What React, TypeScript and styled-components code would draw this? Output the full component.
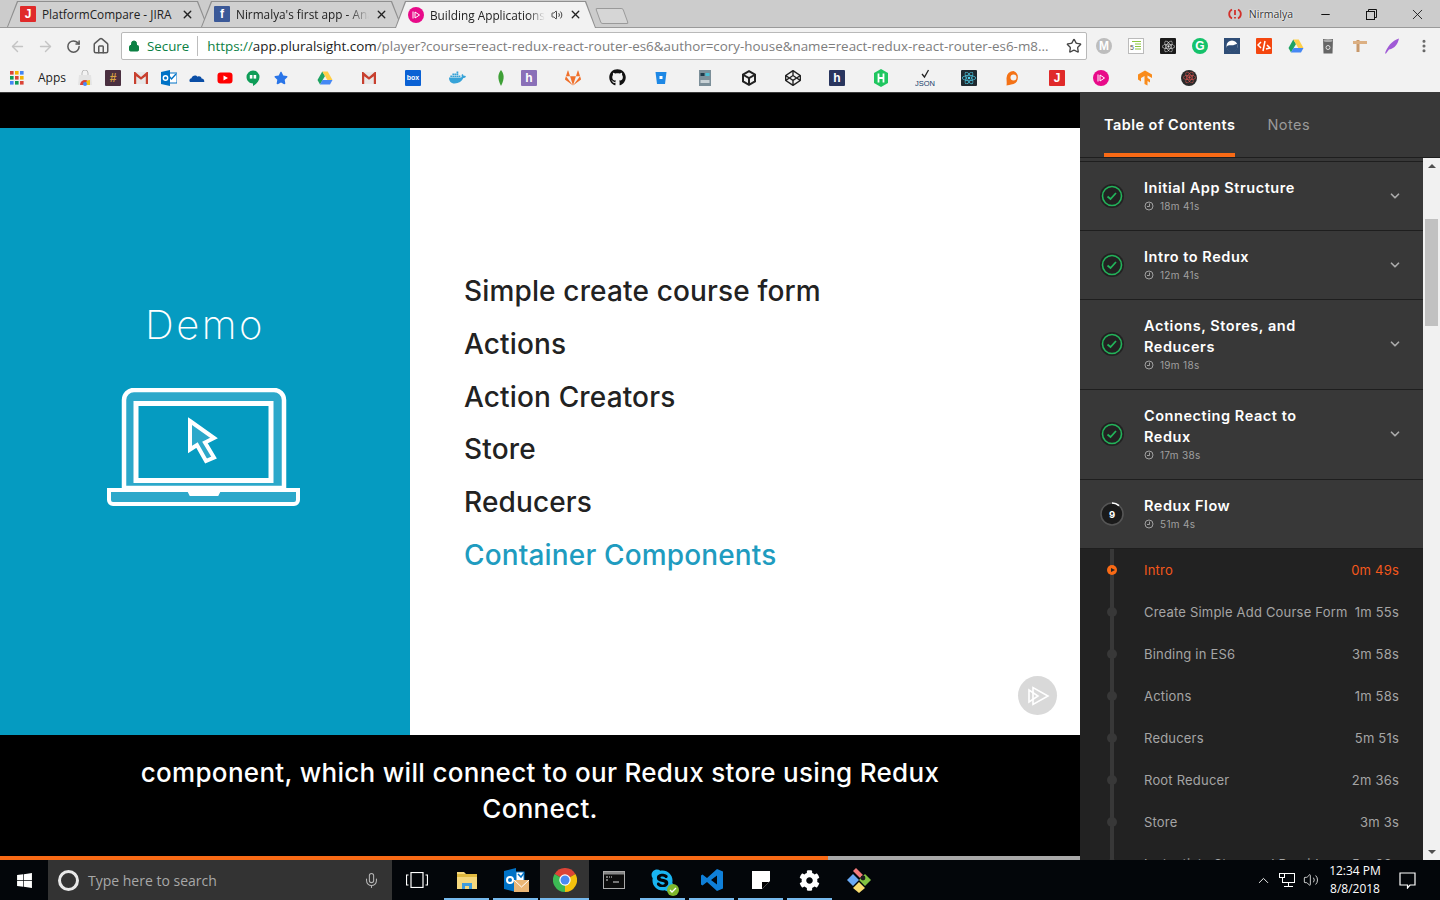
import React from "react"
import styled, { createGlobalStyle } from "styled-components"
import { ArrowLeft, ArrowRight, RotateCw, Home, Star, Lock, Mic, ChevronUp, ChevronDown, Volume2, MoreVertical, X, Minus } from "lucide-react"
import { FaWindows, FaGithub, FaGitlab, FaDocker, FaStar, FaCodepen, FaReact, FaCog, FaSkype } from "react-icons/fa"

const GlobalStyle = createGlobalStyle`
  html, body { margin: 0; padding: 0; background: #000; overflow: hidden; }
  * { box-sizing: border-box; }
`

const Page = styled.div`
  width: 1440px;
  height: 900px;
  display: flex;
  flex-direction: column;
  overflow: hidden;
  font-family: "Open Sans", "Noto Sans", sans-serif;
`

/* browser chrome */
const Browser = styled.div`
  height: 93px;
  display: flex;
  flex-direction: column;
  background: #f2f2f2;
  border-bottom: 1px solid #3a3a3a;
`

const TabStrip = styled.div`
  height: 28px;
  display: flex;
  background: #cccccc;
  border-bottom: 1px solid #9a9a9a;
  padding-left: 7px;
  padding-top: 1px;
`

const Tab = styled.div<{ $active?: boolean }>`
  position: relative;
  width: 201px;
  height: ${p => (p.$active ? 27 : 26)}px;
  margin-right: -7px;
  padding: 0 14px 0 13px;
  display: flex;
  align-items: center;
  gap: 6px;
  font-size: 11.8px;
  color: #222;
  background: #8f8f8f;
  clip-path: polygon(0 100%, 10px 0, calc(100% - 10px) 0, 100% 100%);
  z-index: ${p => (p.$active ? 2 : 1)};
  &::before {
    content: "";
    position: absolute;
    inset: 1px 1px 0 1px;
    background: ${p => (p.$active ? "#f2f2f2" : "#d0d0d0")};
    clip-path: polygon(0 100%, 10px 0, calc(100% - 10px) 0, 100% 100%);
  }
  & > * { position: relative; }
  & > svg { flex: none; }
`

const TabTitle = styled.span<{ $fade?: boolean }>`
  flex: 1;
  min-width: 0;
  white-space: nowrap;
  overflow: hidden;
  ${p => p.$fade && `
    -webkit-mask-image: linear-gradient(90deg, #000 85%, transparent 100%);
    mask-image: linear-gradient(90deg, #000 85%, transparent 100%);
  `}
`

const NewTab = styled.div`
  width: 28px;
  height: 16px;
  margin: 7px 0 0 9px;
  background: #d6d6d6;
  border: 1px solid #9a9a9a;
  transform: skewX(20deg);
  border-radius: 2px;
`

const Spacer = styled.div`
  flex: 1;
`

const Profile = styled.div`
  display: flex;
  align-items: center;
  gap: 7px;
  height: 26px;
  margin-right: 9px;
  font-size: 10.5px;
  color: #333;
  text-shadow: 0 0 2px #fff, 0 0 2px #fff;
`

const WinButton = styled.div`
  width: 46px;
  height: 26px;
  display: flex;
  align-items: center;
  justify-content: center;
  color: #111;
`

const Toolbar = styled.div`
  height: 35px;
  display: flex;
  align-items: center;
  padding: 1px 0 0 3px;
`

const NavButton = styled.div<{ $off?: boolean }>`
  width: 28px;
  height: 28px;
  display: flex;
  align-items: center;
  justify-content: center;
  color: ${p => (p.$off ? "#c4c4c4" : "#5a5a5a")};
`

const Omnibox = styled.div`
  width: 966px;
  height: 28px;
  margin-left: 6px;
  display: flex;
  align-items: center;
  padding: 0 4px 0 6px;
  background: #fff;
  border: 1px solid #b9b9b9;
  border-radius: 2px;
  font-size: 13.3px;
  white-space: nowrap;
`

const Secure = styled.span`
  color: #0b8043;
  margin-left: 7px;
  padding-right: 8px;
  border-right: 1px solid #bdbdbd;
  line-height: 20px;
  margin-right: 9px;
`

const Url = styled.span`
  flex: 1;
  color: #7d7d7d;
  font-size: 13.4px;
  b { font-weight: 400; color: #222; }
  i { font-style: normal; color: #0b8043; }
`

const Extensions = styled.div`
  display: flex;
  margin-left: 1px;
`

const Ext = styled.div`
  width: 32px;
  height: 28px;
  display: flex;
  align-items: center;
  justify-content: center;
`

const Bookmarks = styled.div`
  flex: 1;
  display: flex;
  align-items: center;
  padding-left: 3px;
`

const Mark = styled.div<{ $wide?: boolean }>`
  width: 28px;
  height: 28px;
  flex: none;
  margin-left: ${p => (p.$wide ? 16 : 0)}px;
  display: flex;
  align-items: center;
  justify-content: center;
`

const AppsLabel = styled.span`
  font-size: 12px;
  color: #222;
  width: 40px;
  padding-left: 7px;
`

const Tile = styled.span<{ $bg: string; $fg?: string; $round?: boolean; $small?: boolean }>`
  width: 16px;
  height: 16px;
  flex: none;
  display: flex;
  align-items: center;
  justify-content: center;
  background: ${p => p.$bg};
  color: ${p => p.$fg || "#fff"};
  border-radius: ${p => (p.$round ? "50%" : "1px")};
  font: 700 ${p => (p.$small ? 7 : 12)}px "Liberation Sans", sans-serif;
`

/* player */
const Main = styled.div`
  height: 767px;
  display: flex;
`

const Player = styled.div`
  width: 1080px;
  display: flex;
  flex-direction: column;
  background: #000;
`

const TopBar = styled.div`
  height: 35px;
  background: #000;
`

const Slide = styled.div`
  position: relative;
  height: 607px;
  display: flex;
  background: #fff;
`

const SlideSide = styled.div`
  width: 410px;
  background: #059bc1;
  display: flex;
  flex-direction: column;
  align-items: center;
  padding-top: 174px;
`

const DemoTitle = styled.div`
  font-family: Inter, sans-serif;
  font-weight: 200;
  font-size: 40px;
  line-height: 46px;
  color: #fff;
  letter-spacing: 2.5px;
  margin-bottom: 40px;
`

const LaptopSvg = styled.svg`
  margin-right: 3px;
`

const SlideList = styled.div`
  flex: 1;
  padding: 137px 0 0 54px;
`

const SlideItem = styled.div<{ $hot?: boolean }>`
  height: 52.8px;
  line-height: 53px;
  font-family: Inter, sans-serif;
  font-weight: 500;
  font-size: 28px;
  letter-spacing: 0.15px;
  color: ${p => (p.$hot ? "#1f9cc0" : "#222")};
`

const Watermark = styled.div`
  position: absolute;
  right: 23px;
  bottom: 20px;
  width: 39px;
  height: 39px;
  border-radius: 50%;
  background: #d9d9d9;
  display: flex;
  align-items: center;
  justify-content: center;
`

const Caption = styled.div`
  flex: 1;
  padding-top: 20px;
  text-align: center;
  font-family: Inter, sans-serif;
  font-weight: 500;
  font-size: 26px;
  letter-spacing: 0.3px;
  line-height: 36px;
  color: #fff;
`

const Progress = styled.div`
  height: 4px;
  background: #a8a8a8;
`

const ProgressFill = styled.div<{ $pct: number }>`
  height: 100%;
  width: ${p => p.$pct}%;
  background: #f96a15;
`

/* table of contents */
const Side = styled.div`
  width: 360px;
  display: flex;
  flex-direction: column;
  background: #383838;
  font-family: Inter, sans-serif;
`

const SideTabs = styled.div`
  height: 65px;
  flex: none;
  display: flex;
  gap: 32px;
  padding-left: 24px;
  border-bottom: 1px solid #1e1e1e;
`

const SideTab = styled.div<{ $on?: boolean }>`
  height: 64px;
  line-height: 64px;
  font-size: 14.5px;
  letter-spacing: 0.45px;
  font-weight: ${p => (p.$on ? 600 : 400)};
  color: ${p => (p.$on ? "#fff" : "#9a9a9a")};
  border-bottom: 4px solid ${p => (p.$on ? "#f96a15" : "transparent")};
`

const SideBody = styled.div`
  flex: 1;
  display: flex;
  min-height: 0;
`

const Outline = styled.div`
  flex: 1;
  overflow: hidden;
  padding-top: 3px;
`

const Section = styled.div`
  display: flex;
  align-items: center;
  border-top: 1px solid #1e1e1e;
  padding: 15px 24px 16px 0;
`

const Badge = styled.div`
  width: 64px;
  flex: none;
  display: flex;
  justify-content: center;
`

const SectionText = styled.div`
  flex: 1;
  width: 0;
`

const SectionTitle = styled.div`
  font-size: 14.5px;
  font-weight: 600;
  letter-spacing: 0.55px;
  line-height: 21px;
  color: #fff;
  padding-right: 70px;
`

const SectionTime = styled.div`
  display: flex;
  align-items: center;
  gap: 6px;
  height: 16px;
  font-size: 10px;
  letter-spacing: 0.3px;
  color: #a0a0a0;
`

const Chevron = styled(ChevronDown)`
  color: #aaa;
  margin-right: -3px;
`

const Clips = styled.div`
  position: relative;
  background: #222;
  border-top: 1px solid #1e1e1e;
  &::before {
    content: "";
    position: absolute;
    left: 30px;
    top: 0;
    bottom: 0;
    width: 4px;
    background: #383838;
  }
`

const Clip = styled.div<{ $on?: boolean }>`
  height: 42px;
  display: flex;
  align-items: center;
  padding-right: 24px;
  font-size: 13px;
  letter-spacing: 0.2px;
  color: ${p => (p.$on ? "#f4581c" : "#a5a5a5")};
`

const ClipDot = styled.span<{ $on?: boolean }>`
  position: relative;
  width: 10px;
  height: 10px;
  flex: none;
  margin: 0 27px;
  border-radius: 50%;
  background: ${p => (p.$on ? "#f96a15" : "#383838")};
  ${p => p.$on && `
    &::after {
      content: "";
      position: absolute;
      left: 4px;
      top: 3px;
      border-left: 4px solid #222;
      border-top: 2px solid transparent;
      border-bottom: 2px solid transparent;
    }
  `}
`

const ClipName = styled.span`
  flex: 1;
  white-space: nowrap;
`

const Scrollbar = styled.div`
  width: 17px;
  flex: none;
  display: flex;
  flex-direction: column;
  align-items: center;
  background: #f1f1f1;
`

const ScrollArrow = styled.div<{ $down?: boolean }>`
  width: 0;
  height: 0;
  margin: ${p => (p.$down ? "auto 0 6px" : "6px 0 0")};
  border-left: 4px solid transparent;
  border-right: 4px solid transparent;
  ${p => (p.$down ? "border-top: 4px solid #505050;" : "border-bottom: 4px solid #505050;")}
`

const ScrollThumb = styled.div`
  width: 13px;
  height: 107px;
  margin-top: 51px;
  background: #c1c1c1;
`

/* windows taskbar */
const Taskbar = styled.div`
  height: 40px;
  display: flex;
  align-items: stretch;
  background: #03060a;
`

const StartButton = styled.div`
  width: 48px;
  display: flex;
  align-items: center;
  justify-content: center;
  color: #fff;
`

const SearchBox = styled.div`
  width: 344px;
  display: flex;
  align-items: center;
  padding: 0 12px 0 10px;
  background: #333;
  color: #a8a8a8;
  font-size: 14px;
`

const Cortana = styled.span`
  width: 21px;
  height: 21px;
  margin-right: 9px;
  border: 3px solid #e8e8e8;
  border-radius: 50%;
`

const TaskButton = styled.div<{ $open?: boolean; $active?: boolean; $wide?: boolean }>`
  position: relative;
  width: ${p => (p.$wide ? 50 : 49)}px;
  display: flex;
  align-items: center;
  justify-content: center;
  background: ${p => (p.$active ? "#333" : "transparent")};
  ${p => p.$open && `
    &::after {
      content: "";
      position: absolute;
      left: ${p.$active ? 0 : 2}px;
      right: ${p.$active ? 0 : 2}px;
      bottom: 0;
      height: 2px;
      background: #76b9ed;
    }
  `}
`

const SkypeWrap = styled.span`
  position: relative;
  display: inline-flex;
  svg + svg {
    position: absolute;
    right: -4px;
    bottom: -3px;
  }
`

const Tray = styled.div`
  display: flex;
  align-items: center;
  color: #fff;
  padding-right: 18px;
`

const TrayIcon = styled.div`
  width: 24px;
  display: flex;
  justify-content: center;
`

const Clock = styled.div`
  width: 64px;
  text-align: center;
  font-size: 12px;
  line-height: 18px;
  color: #fff;
`

const Notify = styled.div`
  width: 30px;
  margin-left: 5px;
  display: flex;
  justify-content: center;
`

const ChromeIcon = ({ size = 16 }: { size?: number }) => (
  <svg width={size} height={size} viewBox="0 0 16 16">
    <path d="M8 8L1.07 4A8 8 0 0 1 14.93 4Z" fill="#db4437" />
    <path d="M8 8L14.93 4A8 8 0 0 1 8 16Z" fill="#f4c20d" />
    <path d="M8 8L8 16A8 8 0 0 1 1.07 4Z" fill="#3cba54" />
    <circle cx="8" cy="8" r="3.8" fill="#fff" />
    <circle cx="8" cy="8" r="3" fill="#4a8af4" />
  </svg>
)

const DriveIcon = () => (
  <svg width="16" height="16" viewBox="0 0 16 16">
    <path d="M5.3 1.5L0.5 10L3 14.5L8 6Z" fill="#1ea362" />
    <path d="M5.3 1.5H10.7L15.5 10H10.3Z" fill="#ffcf48" />
    <path d="M3 14.5L5.5 10H15.5L13 14.5Z" fill="#4688f4" />
  </svg>
)

const GmailIcon = () => (
  <svg width="16" height="16" viewBox="0 0 16 16">
    <rect x="1" y="2" width="14" height="12" fill="#e8e8e8" />
    <path d="M1 2V14H3.2V6.2L8 9.800L12.800 6.200V14H15V2H13.800L8 7L2.200 2Z" fill="#c8402f" />
  </svg>
)

const AppsIcon = () => {
  const colors = ["#db4437", "#f4b400", "#4285f4", "#0f9d58", "#db4437", "#f4b400", "#4285f4", "#0f9d58", "#db4437"]
  return (
    <svg width="14" height="14" viewBox="0 0 14 14">
      {colors.map((c, i) => (
        <rect key={i} x={(i % 3) * 5} y={Math.floor(i / 3) * 5} width="3.6" height="3.6" fill={c} />
      ))}
    </svg>
  )
}

const OutlookIcon = ({ size = 16 }: { size?: number }) => (
  <svg width={size} height={size} viewBox="0 0 16 16">
    <rect x="6" y="3" width="10" height="10" fill="#fff" stroke="#0072c6" />
    <path d="M8 6l2.500 3L15 4" fill="none" stroke="#0072c6" strokeWidth="1.400" />
    <path d="M0 2L9 0V16L0 14Z" fill="#0072c6" />
    <circle cx="4.500" cy="8" r="2.200" fill="none" stroke="#fff" strokeWidth="1.400" />
  </svg>
)

const OneDriveIcon = () => (
  <svg width="16" height="16" viewBox="0 0 16 16">
    <path d="M1 12c-1.200-1.500-.4-3.600 1.500-3.800C3.200 5.500 6.800 4.500 8.600 6.800c1.600-1 3.600-.2 4 1.600 1.800 0 3 1.600 2.600 3.600Z" fill="#0a4ea6" />
  </svg>
)

const YoutubeIcon = () => (
  <svg width="16" height="16" viewBox="0 0 16 16">
    <rect x="0.500" y="2.500" width="15" height="11" rx="3" fill="#f00" />
    <path d="M6.500 5.500L11 8L6.500 10.500Z" fill="#fff" />
  </svg>
)

const HangoutsIcon = () => (
  <svg width="16" height="16" viewBox="0 0 16 16">
    <path d="M8 0.500a6.500 6.500 0 0 0-6.500 6.500c0 3.600 3 6.500 6.500 6.500V16c3.500-1.800 6.500-5 6.500-9A6.500 6.500 0 0 0 8 .5Z" fill="#0f9d58" />
    <rect x="4.800" y="5" width="2.600" height="3.600" fill="#fff" />
    <rect x="8.600" y="5" width="2.600" height="3.600" fill="#fff" />
  </svg>
)

const StoreIcon = () => (
  <svg width="16" height="16" viewBox="0 0 16 16">
    <path d="M2 5H14L15 15H1Z" fill="#e4e4e4" />
    <path d="M5 5V3a3 3 0 0 1 6 0V5" fill="none" stroke="#bbb" />
    <path d="M3 15a5 5 0 0 1 10 0Z" fill="#db4437" />
    <path d="M8 15a5 5 0 0 1 5-5v5Z" fill="#f4c20d" />
    <circle cx="8" cy="14" r="2" fill="#4a8af4" />
  </svg>
)

const BucketIcon = () => (
  <svg width="16" height="16" viewBox="0 0 16 16">
    <path d="M2.500 2H13.500L12 14H4Z" fill="#1e88e5" />
    <rect x="6.500" y="6" width="3" height="3" fill="#fff" />
  </svg>
)

const ServerIcon = () => (
  <svg width="16" height="16" viewBox="0 0 16 16">
    <rect x="2" y="0" width="12" height="16" fill="#7c8f99" />
    <rect x="3.500" y="3" width="4" height="3" fill="#1e3a4a" />
    <rect x="8.500" y="3" width="4" height="3" fill="#49c0d6" />
    <rect x="3.500" y="10" width="9" height="3" fill="#c9d2d6" />
  </svg>
)

const LeafIcon = () => (
  <svg width="16" height="16" viewBox="0 0 16 16">
    <path d="M8 0C11 4 12 8 8 16C4 8 5 4 8 0Z" fill="#3fa037" />
  </svg>
)

const CubeIcon = () => (
  <svg width="16" height="16" viewBox="0 0 16 16" fill="none" stroke="#222" strokeWidth="2">
    <path d="M8 1.200L14 4.600V11.400L8 14.800L2 11.400V4.600Z" />
    <path d="M2.500 5L8 8.200L13.500 5M8 8.200V14.500" />
  </svg>
)

const PluralsightIcon = ({ size = 16 }: { size?: number }) => (
  <svg width={size} height={size} viewBox="0 0 16 16">
    <circle cx="8" cy="8" r="8" fill="#e80a89" />
    <path d="M5 4.500V11.500M7 5L11.500 8L7 11Z" fill="none" stroke="#fff" strokeWidth="1" />
  </svg>
)

const TensorIcon = () => (
  <svg width="16" height="16" viewBox="0 0 16 16">
    <path d="M1 4.500L8 .5L15 4.500V8L10.500 5.500V8L13 9.500V12.500L10.500 11V15.500L7.500 14V6L4 8V11.500L1 9.500Z" fill="#f98b1b" />
  </svg>
)

const OrangeIcon = () => (
  <svg width="16" height="16" viewBox="0 0 16 16">
    <path d="M8.500 1a7 7 0 0 1 0 13C5 14.500 3 15.500 1.500 15.500 2 13 1.500 11 1.500 8A7 7 0 0 1 8.500 1Z" fill="#f47216" />
    <circle cx="8.500" cy="7.500" r="3" fill="#f2f2f2" />
  </svg>
)

const HexIcon = () => (
  <svg width="16" height="18" viewBox="0 0 16 18">
    <path d="M8 0L15 4V14L8 18L1 14V4Z" fill="#1fc65f" />
    <path d="M5.500 4.500V13.500M10.500 4.500V13.500M5.500 9H10.500" stroke="#fff" strokeWidth="1.800" />
  </svg>
)

const JsonIcon = () => (
  <svg width="20" height="18" viewBox="0 0 20 18">
    <path d="M7 5L9.500 8L13.500 1" fill="none" stroke="#222" strokeWidth="1.300" />
    <text x="10" y="17" textAnchor="middle" fontSize="7.500" fontFamily="Liberation Sans, sans-serif" fill="#173a6b">JSON</text>
  </svg>
)

const DocIcon = () => (
  <svg width="16" height="16" viewBox="0 0 16 16">
    <rect x="0.500" y="0.500" width="15" height="15" fill="#fff" stroke="#bbb" />
    <path d="M4 3.500H13M7 6H13M7 8.500H13M7 11H13" stroke="#8cc63f" strokeWidth="1.200" />
    <text x="2" y="12" fontSize="7" fontFamily="Liberation Sans, sans-serif" fill="#555">5</text>
  </svg>
)

const SeaIcon = () => (
  <svg width="16" height="16" viewBox="0 0 16 16">
    <rect width="16" height="16" fill="#2f4d76" />
    <circle cx="8" cy="8" r="5.500" fill="#fff" />
    <path d="M2.500 9c2-3 5-1 7.500-2 1.500-.6 2.500-1 3.500-1v2.500a5.500 5.500 0 0 1-11 .5Z" fill="#2f4d76" />
  </svg>
)

const CodeTileIcon = () => (
  <Tile $bg="#f4460f">
    <svg width="14" height="12" viewBox="0 0 14 12" fill="none" stroke="#fff" strokeWidth="1.500">
      <path d="M4 2L1 5L4 8M8 1L6 11M10 5L13 8L9 9" />
    </svg>
  </Tile>
)

const TrashIcon = () => (
  <svg width="16" height="16" viewBox="0 0 16 16">
    <path d="M3 1H13L12.500 15.500H3.500Z" fill="#666" />
    <ellipse cx="8" cy="2.500" rx="4.500" ry="1.500" fill="#aaa" />
    <circle cx="8" cy="9.500" r="2" fill="none" stroke="#ddd" />
  </svg>
)

const SignIcon = () => (
  <svg width="16" height="16" viewBox="0 0 16 16">
    <rect x="4.500" y="2" width="3" height="12" fill="#c8986a" />
    <rect x="1" y="3" width="14" height="3" fill="#dcb083" />
  </svg>
)

const QuillIcon = () => (
  <svg width="16" height="16" viewBox="0 0 16 16">
    <path d="M1 15.500C3 9 8 2.500 15 .5c-1 5-4 10-10 11L2 15.500Z" fill="#a05ad6" />
  </svg>
)

const FolderIcon = () => (
  <svg width="22" height="22" viewBox="0 0 22 22">
    <path d="M1 3H8L10 5H21V20H1Z" fill="#f5d77c" />
    <rect x="1" y="5" width="20" height="3" fill="#e0b93f" />
    <path d="M6 20V14H16V20H13V17H9V20Z" fill="#3f9cdc" />
  </svg>
)

const MailAppIcon = () => (
  <svg width="26" height="26" viewBox="0 0 26 26">
    <path d="M1 4L13 1V25L1 22Z" fill="#0072c6" />
    <rect x="13" y="5" width="8" height="10" fill="#fff" stroke="#0072c6" />
    <circle cx="7" cy="13" r="3" fill="none" stroke="#fff" strokeWidth="2" />
    <path d="M15 7l3 3 3-4" fill="none" stroke="#0072c6" strokeWidth="1.500" />
    <rect x="11" y="13" width="15" height="12" fill="#eab676" />
    <path d="M11 13L18.500 20L26 13" fill="none" stroke="#fff" strokeWidth="1" />
  </svg>
)

const ConsoleIcon = () => (
  <svg width="22" height="18" viewBox="0 0 22 18">
    <rect x="0.500" y="0.500" width="21" height="17" fill="#0c0c0c" stroke="#aaa" />
    <rect x="1" y="1" width="20" height="2.500" fill="#888" />
    <path d="M3 6H5M6 6H7M8 6H9M3 9H5M10 11H16" stroke="#ddd" strokeWidth="1.200" />
  </svg>
)

const SkypeAppIcon = () => (
  <SkypeWrap>
    <FaSkype size={25} color="#19b4f1" />
    <svg width="12" height="12" viewBox="0 0 12 12">
      <circle cx="6" cy="6" r="6" fill="#7fb72d" />
      <path d="M3 6l2 2 4-4" stroke="#fff" fill="none" strokeWidth="1.300" />
    </svg>
  </SkypeWrap>
)

const VscodeIcon = () => (
  <svg width="24" height="24" viewBox="0 0 24 24">
    <path d="M17 1L23 3.500V20.500L17 23L7 14L2.500 17.500L1 16.500V7.500L2.500 6.500L7 10ZM17 7.500L11 12L17 16.500Z" fill="#0f7fd8" fillRule="evenodd" />
  </svg>
)

const StickyIcon = () => (
  <svg width="18" height="18" viewBox="0 0 18 18">
    <path d="M0 0H18V10L10 18H0Z" fill="#fff" />
    <path d="M10 11H17L10 18Z" fill="#000" />
  </svg>
)

const KrakenIcon = () => (
  <svg width="26" height="26" viewBox="0 0 26 26">
    <path d="M10 1L17 8L14 11L7 4Z" fill="#f47c7c" />
    <path d="M7 7L13 13L7 19L1 13Z" fill="#6aa9f4" />
    <path d="M19 7L25 13L19 19L13 13Z" fill="#82c341" />
    <path d="M13 15L19 21L13 26L7 21Z" fill="#f7dc6f" />
    <circle cx="17" cy="11" r="2.400" fill="#1b1b1b" />
  </svg>
)

const TaskViewIcon = () => (
  <svg width="22" height="16" viewBox="0 0 22 16" fill="none" stroke="#fff" strokeWidth="1.200">
    <rect x="5" y="0.500" width="12" height="15" />
    <path d="M2.500 3H0.500V13H2.500M19.500 3H21.500V13H19.500" />
  </svg>
)

const NetworkIcon = () => (
  <svg width="16" height="16" viewBox="0 0 16 16" fill="none" stroke="#fff">
    <rect x="3.500" y="1.500" width="12" height="9" />
    <path d="M9.500 10.500V14M5 14.500H14" />
    <rect x="0.500" y="1.500" width="5" height="4" fill="#03060a" />
  </svg>
)

const NoticeIcon = () => (
  <svg width="17" height="17" viewBox="0 0 17 17" fill="none" stroke="#fff" strokeWidth="1.200">
    <path d="M1 1H16V13H11L8.500 16V13H1Z" />
  </svg>
)

const CheckBadge = () => (
  <svg width="24" height="24" viewBox="0 0 24 24">
    <circle cx="12" cy="12" r="12" fill="#222" />
    <circle cx="12" cy="12" r="9.500" fill="none" stroke="#23b35a" strokeWidth="1.600" />
    <path d="M7.500 12.500L10.500 15L16 9" fill="none" stroke="#23b35a" strokeWidth="1.800" />
  </svg>
)

const NumberBadge = ({ n }: { n: number }) => (
  <svg width="24" height="24" viewBox="0 0 24 24">
    <circle cx="12" cy="12" r="11" fill="#1a1a1a" stroke="#555" strokeWidth="1.600" />
    <path d="M12 1A11 11 0 0 1 19 3.600" fill="none" stroke="#fff" strokeWidth="1.600" />
    <text x="12" y="15.500" textAnchor="middle" fontSize="9.500" fontWeight="700" fontFamily="Inter, sans-serif" fill="#fff">{n}</text>
  </svg>
)

const ClockIcon = () => (
  <svg width="10" height="10" viewBox="0 0 10 10" fill="none" stroke="#a0a0a0">
    <circle cx="5" cy="5" r="4" />
    <path d="M5.500 2.500V5.500H3" />
  </svg>
)

const LaptopIcon = () => (
  <LaptopSvg width="193" height="118" viewBox="0 0 193 118">
    <path d="M17 100V12a10 10 0 0 1 10-10H167a10 10 0 0 1 10 10V100Z" fill="#2ca8ca" stroke="#fff" strokeWidth="4.500" />
    <rect x="29" y="15.500" width="135" height="77" fill="#059bc1" stroke="#fff" strokeWidth="5" />
    <path d="M2 102H191V112a4 4 0 0 1-4 4H6a4 4 0 0 1-4-4Z" fill="#2ca8ca" stroke="#fff" strokeWidth="4" />
    <path d="M82 102L84 106H110L112 102" fill="#fff" stroke="#fff" strokeWidth="4" />
    <path d="M83 33L107 50L98 54.500L107 69.500L99 73L90 57L83 61.500Z" fill="#2ca8ca" stroke="#fff" strokeWidth="4" />
  </LaptopSvg>
)

const WatermarkLogo = () => (
  <svg width="24" height="22" viewBox="0 0 24 22" fill="none" stroke="#fff" strokeWidth="1.600">
    <path d="M7 2.500V19.500L22 11Z" />
    <path d="M3 5V17L12 11Z" />
  </svg>
)

const chapters = [
  { title: "Initial App Structure", time: "18m 41s" },
  { title: "Intro to Redux", time: "12m 41s" },
  { title: "Actions, Stores, and Reducers", time: "19m 18s" },
  { title: "Connecting React to Redux", time: "17m 38s" },
]

const clips = [
  { name: "Create Simple Add Course Form", time: "1m 55s" },
  { name: "Binding in ES6", time: "3m 58s" },
  { name: "Actions", time: "1m 58s" },
  { name: "Reducers", time: "5m 51s" },
  { name: "Root Reducer", time: "2m 36s" },
  { name: "Store", time: "3m 3s" },
  { name: "Instantiate Store and Provider", time: "5m 03s" },
]

const points = ["Simple create course form", "Actions", "Action Creators", "Store", "Reducers"]

export default function App() {
  return (
    <Page>
      <GlobalStyle />
      <Browser>
        <TabStrip>
          <Tab>
            <Tile $bg="#e02a2a">J</Tile>
            <TabTitle>PlatformCompare - JIRA</TabTitle>
            <X size={13} strokeWidth={2.5} color="#222" />
          </Tab>
          <Tab>
            <Tile $bg="#3b5998">f</Tile>
            <TabTitle $fade>Nirmalya's first app - Ana</TabTitle>
            <X size={13} strokeWidth={2.5} color="#222" />
          </Tab>
          <Tab $active>
            <PluralsightIcon />
            <TabTitle $fade>Building Applications</TabTitle>
            <Volume2 size={12} color="#444" />
            <X size={13} strokeWidth={2.5} color="#222" />
          </Tab>
          <NewTab />
          <Spacer />
          <Profile>
            <svg width="14" height="14" viewBox="0 0 14 14" fill="none" stroke="#d2302a" strokeWidth="1.800">
              <path d="M4 2.500A5 5 0 0 0 4 11.500M10 2.500A5 5 0 0 1 10 11.500M7 3V8M7 10V11.500" />
            </svg>
            Nirmalya
          </Profile>
          <WinButton><Minus size={13} /></WinButton>
          <WinButton>
            <svg width="11" height="11" viewBox="0 0 11 11" fill="none" stroke="#111">
              <rect x="0.500" y="2.500" width="8" height="8" />
              <path d="M2.500 2.500V0.500H10.500V8.500H8.500" />
            </svg>
          </WinButton>
          <WinButton><X size={17} strokeWidth={1.2} /></WinButton>
        </TabStrip>
        <Toolbar>
          <NavButton $off><ArrowLeft size={17} /></NavButton>
          <NavButton $off><ArrowRight size={17} /></NavButton>
          <NavButton><RotateCw size={15} strokeWidth={2.400} /></NavButton>
          <NavButton><Home size={18} /></NavButton>
          <Omnibox>
            <Lock size={12} color="#0b8043" fill="#0b8043" />
            <Secure>Secure</Secure>
            <Url>
              <i>https://</i><b>app.pluralsight.com</b>/player?course=react-redux-react-router-es6&author=cory-house&name=react-redux-react-router-es6-m8...
            </Url>
            <Star size={16} color="#444" strokeWidth={2} />
          </Omnibox>
          <Extensions>
            <Ext><Tile $bg="#bdbdbd" $round>M</Tile></Ext>
            <Ext><DocIcon /></Ext>
            <Ext><Tile $bg="#1b1b1b"><FaReact size={13} color="#ddd" /></Tile></Ext>
            <Ext><Tile $bg="#15c26b" $round>G</Tile></Ext>
            <Ext><SeaIcon /></Ext>
            <Ext><CodeTileIcon /></Ext>
            <Ext><DriveIcon /></Ext>
            <Ext><TrashIcon /></Ext>
            <Ext><SignIcon /></Ext>
            <Ext><QuillIcon /></Ext>
            <Ext><MoreVertical size={16} color="#666" strokeWidth={2.600} /></Ext>
          </Extensions>
        </Toolbar>
        <Bookmarks>
          <Mark><AppsIcon /></Mark>
          <AppsLabel>Apps</AppsLabel>
          <Mark><StoreIcon /></Mark>
          <Mark><Tile $bg="#4a3040" $fg="#d9a441">#</Tile></Mark>
          <Mark><GmailIcon /></Mark>
          <Mark><OutlookIcon /></Mark>
          <Mark><OneDriveIcon /></Mark>
          <Mark><YoutubeIcon /></Mark>
          <Mark><HangoutsIcon /></Mark>
          <Mark><FaStar size={14} color="#2a75e8" /></Mark>
          <Mark $wide><DriveIcon /></Mark>
          <Mark $wide><GmailIcon /></Mark>
          <Mark $wide><Tile $bg="#0a61d4" $small>box</Tile></Mark>
          <Mark $wide><FaDocker size={17} color="#37a3d8" /></Mark>
          <Mark $wide><LeafIcon /></Mark>
          <Mark><Tile $bg="#8a70b8">h</Tile></Mark>
          <Mark $wide><FaGitlab size={16} color="#f0702b" /></Mark>
          <Mark $wide><FaGithub size={17} color="#111" /></Mark>
          <Mark $wide><BucketIcon /></Mark>
          <Mark $wide><ServerIcon /></Mark>
          <Mark $wide><CubeIcon /></Mark>
          <Mark $wide><FaCodepen size={16} color="#222" /></Mark>
          <Mark $wide><Tile $bg="#29355e">h</Tile></Mark>
          <Mark $wide><HexIcon /></Mark>
          <Mark $wide><JsonIcon /></Mark>
          <Mark $wide><Tile $bg="#1f2a30"><FaReact size={14} color="#4fd0ec" /></Tile></Mark>
          <Mark $wide><OrangeIcon /></Mark>
          <Mark $wide><Tile $bg="#e02a2a">J</Tile></Mark>
          <Mark $wide><PluralsightIcon /></Mark>
          <Mark $wide><TensorIcon /></Mark>
          <Mark $wide><Tile $bg="#2a2a2a" $round><FaReact size={13} color="#d9534f" /></Tile></Mark>
        </Bookmarks>
      </Browser>

      <Main>
        <Player>
          <TopBar />
          <Slide>
            <SlideSide>
              <DemoTitle>Demo</DemoTitle>
              <LaptopIcon />
            </SlideSide>
            <SlideList>
              {points.map(p => <SlideItem key={p}>{p}</SlideItem>)}
              <SlideItem $hot>Container Components</SlideItem>
            </SlideList>
            <Watermark><WatermarkLogo /></Watermark>
          </Slide>
          <Caption>
            component, which will connect to our Redux store using Redux<br />Connect.
          </Caption>
          <Progress><ProgressFill $pct={76.7} /></Progress>
        </Player>

        <Side>
          <SideTabs>
            <SideTab $on>Table of Contents</SideTab>
            <SideTab>Notes</SideTab>
          </SideTabs>
          <SideBody>
            <Outline>
              {chapters.map(c => (
                <Section key={c.title}>
                  <Badge><CheckBadge /></Badge>
                  <SectionText>
                    <SectionTitle>{c.title}</SectionTitle>
                    <SectionTime><ClockIcon />{c.time}</SectionTime>
                  </SectionText>
                  <Chevron size={14} strokeWidth={3} />
                </Section>
              ))}
              <Section>
                <Badge><NumberBadge n={9} /></Badge>
                <SectionText>
                  <SectionTitle>Redux Flow</SectionTitle>
                  <SectionTime><ClockIcon />51m 4s</SectionTime>
                </SectionText>
              </Section>
              <Clips>
                <Clip $on>
                  <ClipDot $on />
                  <ClipName>Intro</ClipName>
                  0m 49s
                </Clip>
                {clips.map(c => (
                  <Clip key={c.name}>
                    <ClipDot />
                    <ClipName>{c.name}</ClipName>
                    {c.time}
                  </Clip>
                ))}
              </Clips>
            </Outline>
            <Scrollbar>
              <ScrollArrow />
              <ScrollThumb />
              <ScrollArrow $down />
            </Scrollbar>
          </SideBody>
        </Side>
      </Main>

      <Taskbar>
        <StartButton><FaWindows size={17} /></StartButton>
        <SearchBox>
          <Cortana />
          <Spacer>Type here to search</Spacer>
          <Mic size={17} strokeWidth={1.500} color="#b5b5b5" />
        </SearchBox>
        <TaskButton $wide><TaskViewIcon /></TaskButton>
        <TaskButton $open><FolderIcon /></TaskButton>
        <TaskButton $open><MailAppIcon /></TaskButton>
        <TaskButton $open $active><ChromeIcon size={24} /></TaskButton>
        <TaskButton><ConsoleIcon /></TaskButton>
        <TaskButton $open><SkypeAppIcon /></TaskButton>
        <TaskButton $open><VscodeIcon /></TaskButton>
        <TaskButton $open><StickyIcon /></TaskButton>
        <TaskButton $open><FaCog size={21} color="#fff" /></TaskButton>
        <TaskButton><KrakenIcon /></TaskButton>
        <Spacer />
        <Tray>
          <TrayIcon><ChevronUp size={17} strokeWidth={1.300} /></TrayIcon>
          <TrayIcon><NetworkIcon /></TrayIcon>
          <TrayIcon><Volume2 size={16} strokeWidth={1.200} /></TrayIcon>
          <Clock>12:34 PM<br />8/8/2018</Clock>
          <Notify><NoticeIcon /></Notify>
        </Tray>
      </Taskbar>
    </Page>
  )
}
